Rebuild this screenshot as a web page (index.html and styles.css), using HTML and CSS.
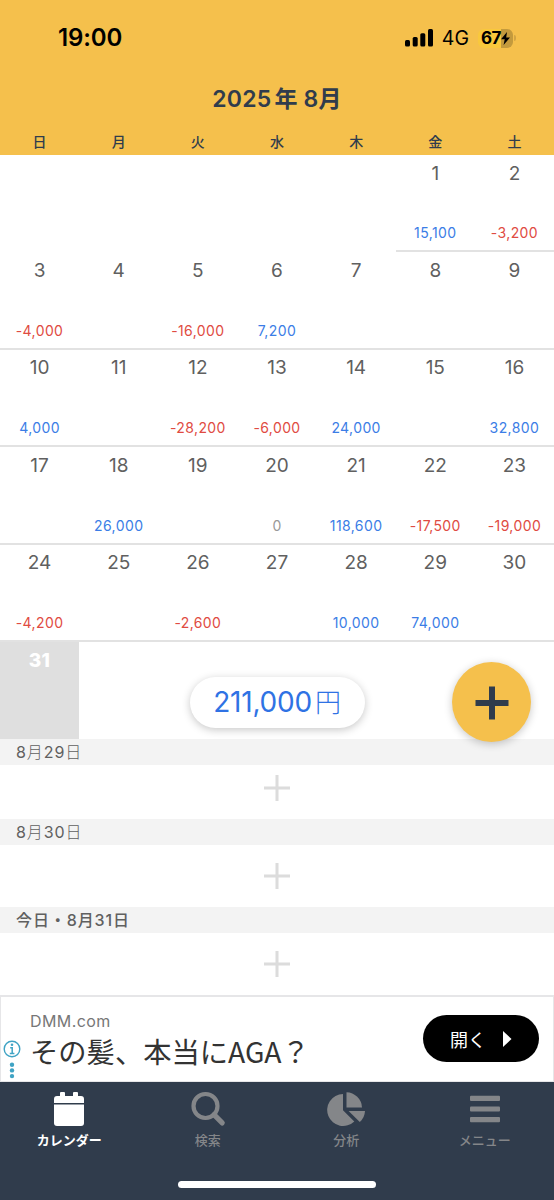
FILE: index.html
```html
<!DOCTYPE html>
<html lang="ja">
<head>
    <meta charset="UTF-8">
    <meta name="viewport" content="width=device-width, initial-scale=1.0">
    <title>カレンダー</title>
    <link rel="stylesheet" href="styles.css">
</head>
<body>
    <header class="header">
        <div class="status-bar">
            <span class="clock">19:00</span>
            <div class="status-right">
                <svg class="signal" width="28" height="18" viewBox="0 0 28 18">
                    <rect x="0" y="11" width="5" height="6.5" rx="1.5"/>
                    <rect x="7.7" y="8" width="5" height="9.5" rx="1.5"/>
                    <rect x="15.3" y="4.3" width="5" height="13.2" rx="1.5"/>
                    <rect x="23" y="0" width="5" height="17.5" rx="1.5"/>
                </svg>
                <span class="network">4G</span>
                <div class="battery">
                    <span>67</span>
                    <svg width="9" height="13" viewBox="0 0 9 13"><path d="M6 0L0 7.3h3.7L2.6 13 9 5.4H5.2z"/></svg>
                </div>
                <i class="battery-tip"></i>
            </div>
        </div>
        <h1 class="month">2025<span class="nen">年</span>8月</h1>
        <div class="weekdays">
            <span>日</span><span>月</span><span>火</span><span>水</span><span>木</span><span>金</span><span>土</span>
        </div>
    </header>

    <main class="calendar">
        <div class="day empty"></div>
        <div class="day empty"></div>
        <div class="day empty"></div>
        <div class="day empty"></div>
        <div class="day empty"></div>
        <div class="day"><b>1</b><span class="plus">15,100</span></div>
        <div class="day"><b>2</b><span class="minus">-3,200</span></div>

        <div class="day"><b>3</b><span class="minus">-4,000</span></div>
        <div class="day"><b>4</b></div>
        <div class="day"><b>5</b><span class="minus">-16,000</span></div>
        <div class="day"><b>6</b><span class="plus">7,200</span></div>
        <div class="day"><b>7</b></div>
        <div class="day"><b>8</b></div>
        <div class="day"><b>9</b></div>

        <div class="day"><b>10</b><span class="plus">4,000</span></div>
        <div class="day"><b>11</b></div>
        <div class="day"><b>12</b><span class="minus">-28,200</span></div>
        <div class="day"><b>13</b><span class="minus">-6,000</span></div>
        <div class="day"><b>14</b><span class="plus">24,000</span></div>
        <div class="day"><b>15</b></div>
        <div class="day"><b>16</b><span class="plus">32,800</span></div>

        <div class="day"><b>17</b></div>
        <div class="day"><b>18</b><span class="plus">26,000</span></div>
        <div class="day"><b>19</b></div>
        <div class="day"><b>20</b><span class="zero">0</span></div>
        <div class="day"><b>21</b><span class="plus">118,600</span></div>
        <div class="day"><b>22</b><span class="minus">-17,500</span></div>
        <div class="day"><b>23</b><span class="minus">-19,000</span></div>

        <div class="day"><b>24</b><span class="minus">-4,200</span></div>
        <div class="day"><b>25</b></div>
        <div class="day"><b>26</b><span class="minus">-2,600</span></div>
        <div class="day"><b>27</b></div>
        <div class="day"><b>28</b><span class="plus">10,000</span></div>
        <div class="day"><b>29</b><span class="plus">74,000</span></div>
        <div class="day"><b>30</b></div>

        <div class="day today"><b>31</b></div>

        <!-- Monthly total and add button float over the last week -->
        <div class="total">211,000<span>円</span></div>
        <button class="add" aria-label="追加">
            <svg width="34" height="34" viewBox="0 0 34 34"><path d="M17 0.5v33M0.5 17h33"/></svg>
        </button>
    </main>

    <section class="entries">
        <h2 class="date">8<span>月</span>29<span>日</span></h2>
        <div class="entry first"><svg width="26" height="26" viewBox="0 0 26 26"><path d="M13 0v26M0 13h26"/></svg></div>
        <h2 class="date">8<span>月</span>30<span>日</span></h2>
        <div class="entry"><svg width="26" height="26" viewBox="0 0 26 26"><path d="M13 0v26M0 13h26"/></svg></div>
        <h2 class="date current">今日・8月31日</h2>
        <div class="entry"><svg width="26" height="26" viewBox="0 0 26 26"><path d="M13 0v26M0 13h26"/></svg></div>
    </section>

    <aside class="ad">
        <svg class="ad-info" width="18" height="40" viewBox="0 0 18 40">
            <circle cx="9" cy="9" r="7.8" fill="none" stroke="#3fa3c4" stroke-width="1.4"/>
            <path d="M7.2 7.8h2v5.6M6.8 13.4h4.6" fill="none" stroke="#3fa3c4" stroke-width="1.5"/>
            <circle cx="9" cy="4.8" r="1.3"/>
            <circle cx="9" cy="24.7" r="2.2"/>
            <circle cx="9" cy="30.4" r="2.2"/>
            <circle cx="9" cy="36.1" r="2.2"/>
        </svg>
        <div class="ad-text">
            <span class="ad-site">DMM.com</span>
            <span class="ad-title">その髪、本当にAGA？</span>
        </div>
        <button class="ad-open">開く<svg width="9" height="16" viewBox="0 0 9 16"><path d="M0 0l8.5 8L0 16z"/></svg></button>
    </aside>

    <footer class="footer">
        <nav class="tabs">
            <a class="tab active">
                <svg width="40" height="36" viewBox="0 0 40 36">
                    <path d="M5 12V8q0-3 3-3h3V2q0-1 1-1h3q1 0 1 1v3h8V2q0-1 1-1h3q1 0 1 1v3h3q3 0 3 3v4z"/>
                    <path d="M5 13.4h30v18.6q0 3-3 3H8q-3 0-3-3z"/>
                </svg>
                カレンダー
            </a>
            <a class="tab">
                <svg width="40" height="36" viewBox="0 0 40 36">
                    <circle cx="17.5" cy="15" r="12" fill="none" stroke="#848689" stroke-width="4.2"/>
                    <path d="M26 23.7l8.2 8.2" stroke="#848689" stroke-width="5.2" stroke-linecap="round"/>
                </svg>
                検索
            </a>
            <a class="tab">
                <svg width="40" height="36" viewBox="0 0 40 36">
                    <path d="M17 3v16.2L28.3 30.5A16 16 0 1 1 17 3z"/>
                    <path d="M20.5 1.2A16 16 0 0 1 36 16.5H20.5z"/>
                    <path d="M22.6 20H39a16 16 0 0 1-5.2 11z"/>
                </svg>
                分析
            </a>
            <a class="tab">
                <svg width="40" height="36" viewBox="0 0 40 36">
                    <rect x="5" y="4.8" width="30" height="5.2" rx="1"/>
                    <rect x="5" y="15.4" width="30" height="5.2" rx="1"/>
                    <rect x="5" y="26" width="30" height="5.2" rx="1"/>
                </svg>
                メニュー
            </a>
        </nav>
        <div class="home-indicator"></div>
    </footer>
</body>
</html>
```
FILE: styles.css
```css
* {
    box-sizing: border-box;
}
body {
    margin: 0;
    width: 554px;
    height: 1200px;
    overflow: hidden;
    background: #fff;
    color: #606060;
    font-family: Inter, "Noto Sans CJK JP", sans-serif;
}
button {
    border: none;
    padding: 0;
    font-family: inherit;
}
.header {
    height: 155px;
    background: #f5c04c;
    color: #303c4c;
}
.status-bar {
    height: 76px;
    padding: 0 38px 0 58px;
    display: flex;
    align-items: center;
    justify-content: space-between;
    color: #000;
}
.clock {
    font-size: 24px;
    font-weight: 600;
    line-height: 30px;
    letter-spacing: -0.1px;
}
.status-right {
    display: flex;
    align-items: center;
}
.network {
    margin-left: 9px;
    font-size: 19.5px;
    line-height: 24px;
}
.battery {
    width: 35px;
    height: 19px;
    margin-left: 9px;
    padding-left: 3px;
    display: flex;
    align-items: center;
    border-radius: 6px;
    background: linear-gradient(90deg, #f9c83c 23px, #c39a3d 23px);
    font-size: 17px;
    font-weight: 700;
    letter-spacing: -0.6px;
}
.battery-tip {
    width: 2px;
    height: 6px;
    margin-left: 1px;
    border-radius: 0 2px 2px 0;
    background: #d3a443;
}
.month {
    margin: 0;
    height: 46px;
    text-align: center;
    font-size: 23px;
    font-weight: 600;
    line-height: 46px;
    letter-spacing: 0.2px;
}
.nen {
    margin: 0 6px 0 3px;
}
.weekdays {
    display: grid;
    grid-template-columns: repeat(7, 1fr);
    text-align: center;
    font-size: 14px;
    font-weight: 500;
    line-height: 40px;
}
.calendar {
    position: relative;
    height: 584px;
    display: grid;
    grid-template-columns: repeat(7, 1fr);
    grid-template-rows: repeat(5, 97.4px) 97px;
}
.day {
    display: flex;
    flex-direction: column;
    align-items: center;
    justify-content: space-between;
    padding: 6.6px 0 7px;
    border-bottom: 2px solid #e2e2e2;
}
.day.empty {
    border-bottom: none;
}
.day b {
    font-size: 19px;
    font-weight: 400;
    line-height: 24px;
}
.day span {
    font-size: 14px;
    line-height: 20px;
    letter-spacing: 0.4px;
}
.day .plus {
    color: #3b7de6;
}
.day .minus {
    color: #df4b42;
}
.day .zero {
    color: #999;
}
.day.today {
    border-bottom: none;
    background: #dfdfdf;
    color: #fff;
}
.day.today b {
    font-weight: 800;
    letter-spacing: 0.5px;
}
.total {
    position: absolute;
    left: 190px;
    top: 522px;
    width: 175px;
    height: 51px;
    display: flex;
    align-items: center;
    justify-content: center;
    border-radius: 26px;
    background: #fff;
    box-shadow: 0 2px 8px rgba(0, 0, 0, 0.22);
    color: #2f72e4;
    font-size: 28px;
    line-height: 53px;
    letter-spacing: -0.2px;
}
.total span {
    margin: 0 1px 0 3px;
    font-size: 26px;
    font-weight: 300;
}
.add {
    position: absolute;
    left: 452px;
    top: 507px;
    width: 79px;
    height: 80px;
    display: flex;
    align-items: center;
    justify-content: center;
    padding-top: 2px;
    border-radius: 50%;
    background: #f5c04c;
    box-shadow: 0 2px 8px rgba(0, 0, 0, 0.22);
}
.add path {
    stroke: #303c4c;
    stroke-width: 6;
}
.entries {
    height: 256px;
}
.date {
    margin: 0;
    height: 26px;
    padding-left: 16px;
    background: #f3f3f3;
    font-size: 16px;
    font-weight: 400;
    line-height: 27px;
    letter-spacing: 0.9px;
}
.date span {
    font-weight: 300;
}
.date.current {
    font-weight: 500;
}
.entry {
    height: 62px;
    display: flex;
    align-items: center;
    justify-content: center;
}
.entry.first {
    height: 54px;
    padding-bottom: 8px;
}
.entry path {
    stroke: #dcdcdc;
    stroke-width: 3;
}
.ad {
    height: 87px;
    display: flex;
    align-items: center;
    padding: 0 14px 0 2px;
    border: 2px solid #e6e6e8;
    border-width: 2px 1px 1px;
}
.ad-info {
    margin-top: 42px;
    fill: #3fa3c4;
}
.ad-text {
    margin: 3px 0 0 9px;
    display: flex;
    flex-direction: column;
}
.ad-site {
    font-size: 16px;
    line-height: 20px;
    letter-spacing: 0.4px;
    color: #777;
}
.ad-title {
    font-family: "Noto Sans CJK JP", sans-serif;
    font-size: 28.3px;
    line-height: 40px;
    color: #333;
}
.ad-open {
    width: 116px;
    height: 47px;
    margin-left: auto;
    margin-bottom: 1px;
    display: flex;
    align-items: center;
    justify-content: center;
    gap: 17px;
    border-radius: 24px;
    background: #000;
    color: #fff;
    font-size: 18px;
}
.ad-open svg {
    fill: #fff;
}
.footer {
    height: 118px;
    background: #303c4c;
}
.tabs {
    display: grid;
    grid-template-columns: repeat(4, 1fr);
    height: 103px;
    padding-top: 9px;
}
.tab {
    display: flex;
    flex-direction: column;
    align-items: center;
    font-size: 13px;
    font-weight: 500;
    line-height: 26px;
    color: #848689;
    fill: #848689;
}
.tab.active {
    color: #fff;
    fill: #fff;
    font-weight: 700;
}
.home-indicator {
    width: 198px;
    height: 7px;
    margin: -4px auto 0;
    border-radius: 4px;
    background: #fff;
}
```
